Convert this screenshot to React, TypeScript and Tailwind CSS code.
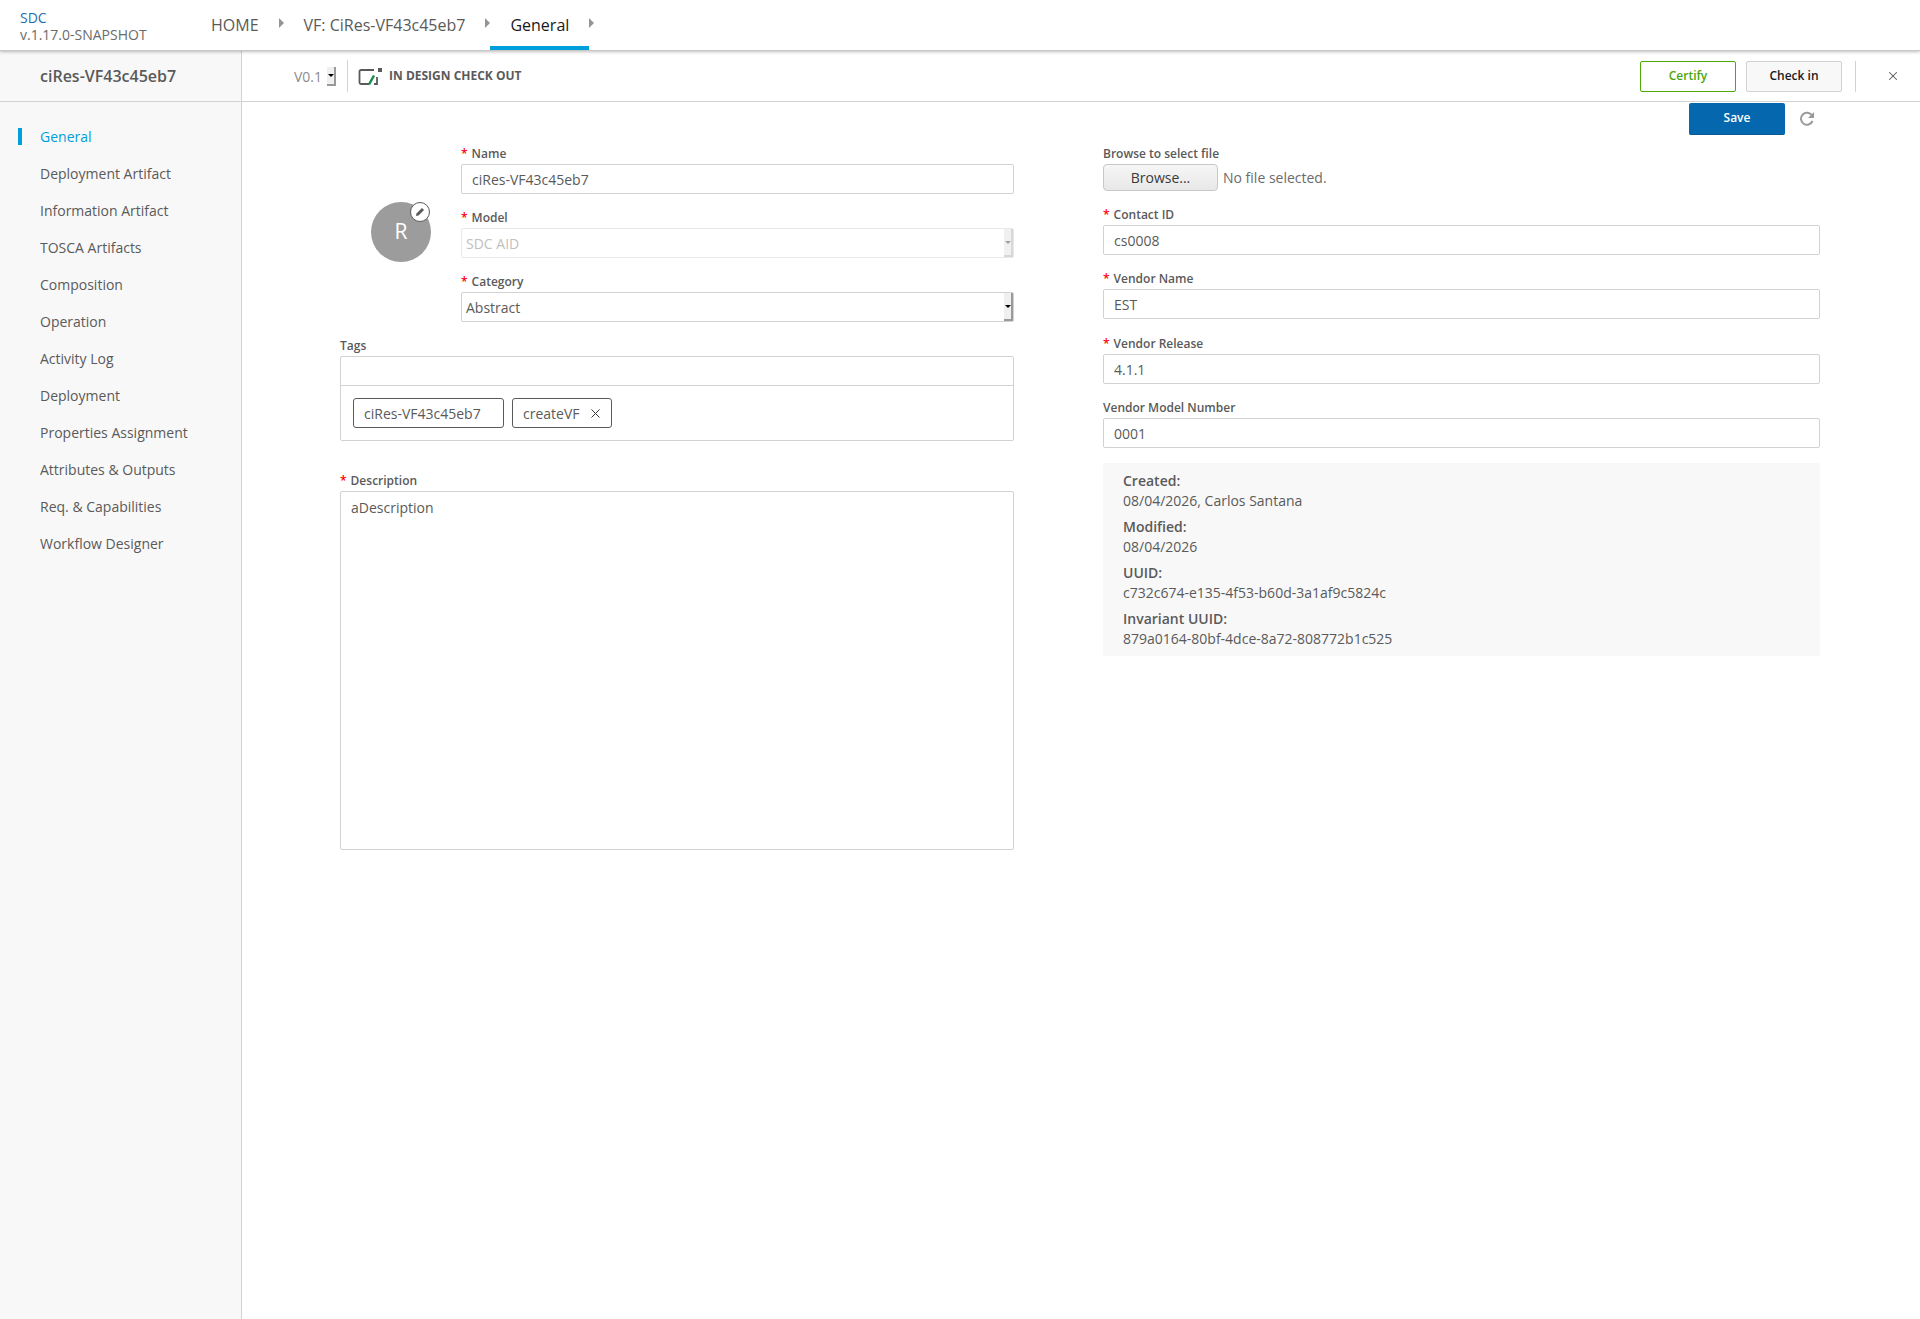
import { X } from 'lucide-react'

const navItems = [
  'General',
  'Deployment Artifact',
  'Information Artifact',
  'TOSCA Artifacts',
  'Composition',
  'Operation',
  'Activity Log',
  'Deployment',
  'Properties Assignment',
  'Attributes & Outputs',
  'Req. & Capabilities',
  'Workflow Designer',
]

function Label({ text, required }: { text: string; required?: boolean }) {
  return (
    <div className="h-[20px] text-[12px] leading-[20px] font-semibold text-[#5a5a5a]">
      {required && <span className="mr-[4px] text-[#f00]">*</span>}
      {text}
    </div>
  )
}

function TextField({ value }: { value: string }) {
  return (
    <input
      readOnly
      value={value}
      className="h-[30px] w-full rounded-[2px] border border-[#d2d2d2] bg-white px-[10px] text-[14px] text-[#5a5a5a] outline-none"
    />
  )
}

function SelectBox({ value, disabled }: { value: string; disabled?: boolean }) {
  return (
    <div
      className={`flex h-[30px] w-full items-center justify-between rounded-[2px] border pl-[4px] text-[14px] ${
        disabled ? 'border-[#e8e8e8] text-[#c0c0c0]' : 'border-[#d2d2d2] text-[#5a5a5a]'
      }`}
    >
      <span>{value}</span>
      <SelectArrow disabled={disabled} />
    </div>
  )
}

function SelectArrow({ disabled }: { disabled?: boolean }) {
  return (
    <div
      className={`flex h-full w-[9px] items-center justify-center border-r-[2px] border-b-[2px] bg-[#f0f0f0] ${
        disabled ? 'border-[#d8d8d8]' : 'border-[#9a9a9a]'
      }`}
    >
      <div
        className={`h-0 w-0 border-x-[3px] border-t-[3px] border-x-transparent ${
          disabled ? 'border-t-[#a0a0a0]' : 'border-t-black'
        }`}
      />
    </div>
  )
}

function Crumb({ text, active }: { text: string; active?: boolean }) {
  return (
    <div className="flex h-full items-center">
      <div
        className={`flex h-full items-center border-b-[4px] px-[20px] pt-[4px] text-[16px] ${
          active ? 'border-[#009fdb] text-[#191919]' : 'border-transparent text-[#5a5a5a]'
        }`}
      >
        {text}
      </div>
      <div className="mb-[4px] h-0 w-0 border-y-[5px] border-l-[5px] border-y-transparent border-l-[#959595]" />
    </div>
  )
}

function InfoBlock({ title, value }: { title: string; value: string }) {
  return (
    <div className="mb-[6px]">
      <div className="text-[14px] leading-[20px] font-semibold text-[#5a5a5a]">{title}</div>
      <div className="text-[14px] leading-[20px] text-[#5a5a5a]">{value}</div>
    </div>
  )
}

export default function App() {
  return (
    <div className="flex min-h-[1319px] flex-col bg-white font-['Open_Sans',sans-serif]">
      <header className="relative z-10 flex h-[51px] items-stretch border-b border-[#c8c8c8] bg-white shadow-[0_1px_3px_rgba(0,0,0,0.25)]">
        <div className="w-[191px] pt-[9px] pl-[20px] text-[14px] leading-[17px]">
          <div className="text-[#1e6fb0]">SDC</div>
          <div className="text-[#6b6b6b]">v.1.17.0-SNAPSHOT</div>
        </div>
        <Crumb text="HOME" />
        <Crumb text="VF: CiRes-VF43c45eb7" />
        <Crumb text="General" active />
      </header>

      <div className="flex flex-1">
        <aside className="w-[242px] shrink-0 border-r border-[#d2d2d2] bg-[#f8f8f8]">
          <div className="flex h-[51px] items-center border-b border-[#d2d2d2] pl-[40px] text-[16px] font-semibold text-[#5a5a5a]">
            ciRes-VF43c45eb7
          </div>
          <nav className="pt-[16px]">
            {navItems.map((item, index) => (
              <div key={item} className="relative flex h-[37px] items-center pl-[40px] text-[14px]">
                {index === 0 && <div className="absolute top-[10px] left-[18px] h-[17px] w-[4px] bg-[#009fdb]" />}
                <span className={index === 0 ? 'text-[#009fdb]' : 'text-[#5a5a5a]'}>{item}</span>
              </div>
            ))}
          </nav>
        </aside>

        <main className="min-w-0 flex-1">
          <div className="flex h-[51px] items-center border-b border-[#d2d2d2] pr-[20px] pl-[52px]">
            <span className="text-[14px] text-[#8c8c8c]">V0.1</span>
            <div className="mt-[1px] ml-[5px] h-[19px] w-[10px]">
              <SelectArrow />
            </div>
            <div className="mx-[10px] h-[32px] w-px bg-[#d2d2d2]" />
            <svg width="26" height="20" viewBox="0 0 26 20" fill="none" className="shrink-0">
              <path d="M16 4H3a1.5 1.5 0 0 0-1.500 1.500v11A1.500 1.500 0 0 0 3 18h8" stroke="#5a5a5a" strokeWidth="1.800" />
              <path d="M11 18.500l5-9" stroke="#1e8a4c" strokeWidth="2.500" />
              <path d="M19 11v7h-3" stroke="#5a5a5a" strokeWidth="1.800" />
              <rect x="20" y="2" width="4" height="4" fill="#5a5a5a" />
            </svg>
            <span className="ml-[5px] text-[12px] font-bold text-[#5a5a5a]">IN DESIGN CHECK OUT</span>
            <div className="flex-1" />
            <button className="h-[31px] w-[96px] rounded-[2px] border border-[#4ca90c] text-[12px] font-semibold text-[#4ca90c]">
              Certify
            </button>
            <button className="ml-[10px] h-[31px] w-[96px] rounded-[2px] border border-[#d2d2d2] bg-[#f8f8f8] text-[12px] font-semibold text-[#191919]">
              Check in
            </button>
            <div className="ml-[13px] h-[31px] w-px bg-[#d2d2d2]" />
            <X className="ml-[30px] text-[#5a5a5a]" size={14} strokeWidth={1.8} />
          </div>

          <div className="flex h-[33px] items-center pr-[105px]">
            <div className="flex-1" />
            <button className="h-[32px] w-[96px] rounded-[2px] border-b border-[#045a94] bg-[#0568ae] text-[12px] font-semibold text-white">
              Save
            </button>
            <svg width="16" height="16" viewBox="0 0 16 16" fill="none" className="ml-[14px]">
              <path d="M13 4.500A6 6 0 1 0 13.500 10" stroke="#9a9a9a" strokeWidth="2" />
              <path d="M15 1v6H9z" fill="#9a9a9a" />
            </svg>
          </div>

          <div className="flex pt-[9px] pl-[98px]">
            <div className="w-[674px] shrink-0">
              <div className="flex">
                <div className="w-[121px] shrink-0 pt-[58px] pl-[31px]">
                  <div className="relative flex h-[60px] w-[60px] items-center justify-center rounded-full bg-[#9c9c9c] text-[21px] text-white">
                    R
                    <div className="absolute top-[0px] right-[1px] flex h-[20px] w-[20px] items-center justify-center rounded-full border border-[#5a5a5a] bg-white">
                      <svg width="10" height="10" viewBox="0 0 10 10">
                        <path d="M7 1l2 2-5.500 5.500L1 9l.5-2.500z" fill="#5a5a5a" />
                      </svg>
                    </div>
                  </div>
                </div>
                <div className="flex-1">
                  <Label text="Name" required />
                  <TextField value="ciRes-VF43c45eb7" />
                  <div className="mt-[14px]">
                    <Label text="Model" required />
                    <SelectBox value="SDC AID" disabled />
                  </div>
                  <div className="mt-[14px]">
                    <Label text="Category" required />
                    <SelectBox value="Abstract" />
                  </div>
                </div>
              </div>

              <div className="mt-[14px]">
                <Label text="Tags" />
                <div className="rounded-[2px] border border-[#d2d2d2]">
                  <div className="h-[29px] border-b border-[#d2d2d2]" />
                  <div className="flex gap-[8px] px-[12px] pt-[12px] pb-[12px]">
                    <span className="flex h-[30px] w-[151px] items-center rounded-[3px] border border-[#5a5a5a] pl-[10px] text-[14px] text-[#5a5a5a]">
                      ciRes-VF43c45eb7
                    </span>
                    <span className="flex h-[30px] w-[100px] items-center rounded-[3px] border border-[#5a5a5a] pl-[10px] text-[14px] text-[#5a5a5a]">
                      createVF
                      <X className="ml-[8px] text-[#333]" size={15} strokeWidth={1.6} />
                    </span>
                  </div>
                </div>
              </div>

              <div className="mt-[30px]">
                <Label text="Description" required />
                <div className="h-[359px] rounded-[2px] border border-[#d2d2d2] px-[10px] py-[5px] text-[14px] leading-[22px] text-[#5a5a5a]">
                  aDescription
                </div>
              </div>
            </div>

            <div className="ml-[89px] w-[717px] shrink-0">
              <Label text="Browse to select file" />
              <div className="flex h-[27px] items-center">
                <button className="h-[27px] w-[115px] rounded-[4px] border border-[#c8c8c8] bg-gradient-to-b from-[#f6f6f6] to-[#e8e8e8] text-[14px] text-[#3a3a3a]">
                  Browse...
                </button>
                <span className="ml-[5px] text-[14px] text-[#6b6b6b]">No file selected.</span>
              </div>
              <div className="mt-[14px]">
                <Label text="Contact ID" required />
                <TextField value="cs0008" />
              </div>
              <div className="mt-[14px]">
                <Label text="Vendor Name" required />
                <TextField value="EST" />
              </div>
              <div className="mt-[15px]">
                <Label text="Vendor Release" required />
                <TextField value="4.1.1" />
              </div>
              <div className="mt-[14px]">
                <Label text="Vendor Model Number" />
                <TextField value="0001" />
              </div>
              <div className="mt-[15px] bg-[#f8f8f8] px-[20px] pt-[8px] pb-[1px]">
                <InfoBlock title="Created:" value="08/04/2026, Carlos Santana" />
                <InfoBlock title="Modified:" value="08/04/2026" />
                <InfoBlock title="UUID:" value="c732c674-e135-4f53-b60d-3a1af9c5824c" />
                <InfoBlock title="Invariant UUID:" value="879a0164-80bf-4dce-8a72-808772b1c525" />
              </div>
            </div>
          </div>
        </main>
      </div>
    </div>
  )
}
